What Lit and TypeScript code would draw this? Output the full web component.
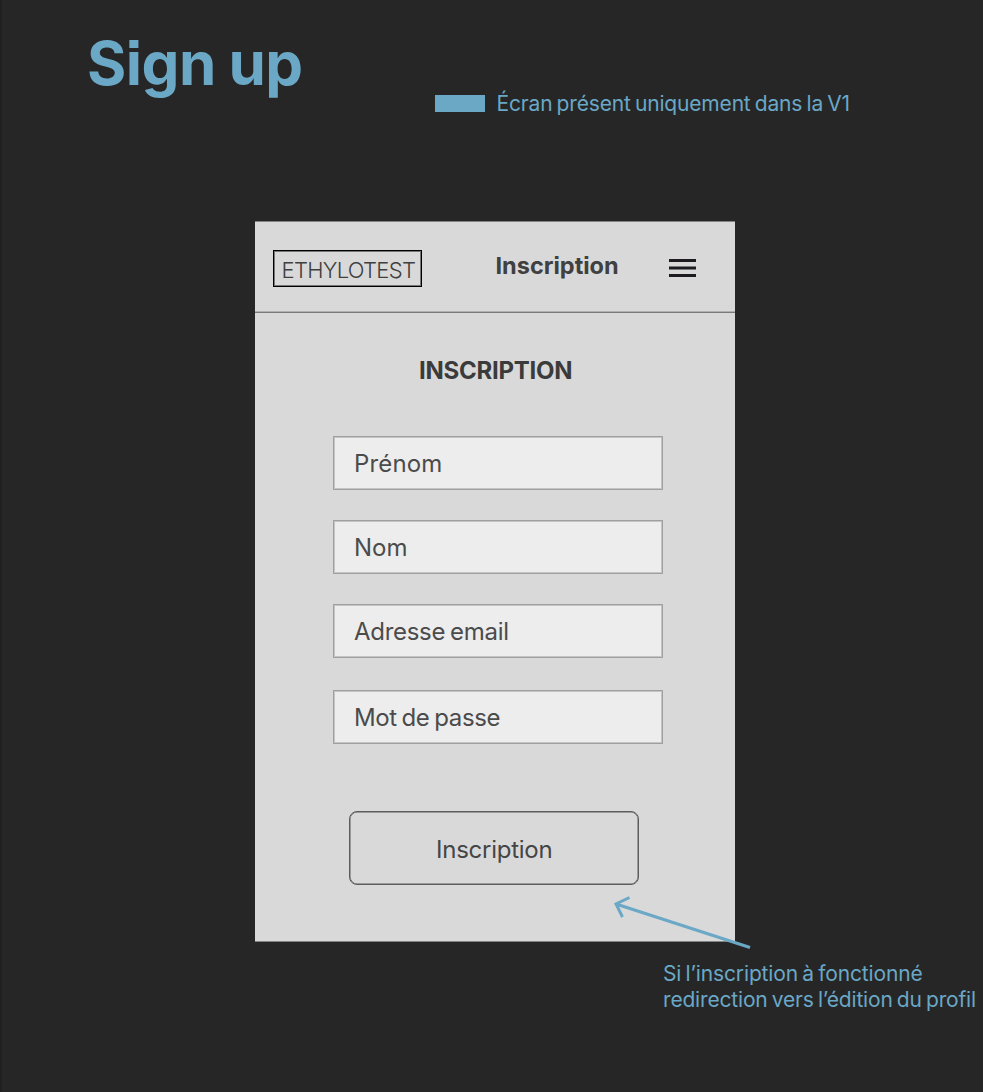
import { LitElement, html, css } from "lit";
import { customElement, property } from "lit/decorators.js";

@customElement("form-field")
class FormField extends LitElement {
  @property() label = "";
  static styles = css`
    :host {
      display: block;
      box-sizing: border-box;
      width: 330px;
      height: 54px;
      padding-left: 20px;
      border: 1px solid #a0a0a0;
      box-shadow: inset 0 0 0 1px #c4c4c4;
      background: #ededed;
      color: #4b4b4b;
      font-size: 24px;
      font-weight: 400;
      line-height: 54px;
      white-space: nowrap;
      word-spacing: -1.5px;
      letter-spacing: var(--track, 0);
    }
  `;
  render() {
    return html`${this.label}`;
  }
}

@customElement("app-root")
class AppRoot extends LitElement {
  static styles = css`
    :host {
      display: block;
      position: relative;
      box-sizing: border-box;
      width: 983px;
      height: 1092px;
      overflow: hidden;
      background: #262626;
      border-left: 2px solid #202020;
      font-family: Inter, "Liberation Sans", sans-serif;
      font-feature-settings: "ss07" 1;
      color: #6aa8c6;
    }
    .top {
      display: flex;
      height: 221px;
      box-sizing: border-box;
      padding: 33px 0 0 85px;
    }
    h1 {
      margin: 0;
      width: 348px;
      font-size: 60px;
      line-height: 60px;
      font-weight: 700;
      letter-spacing: -0.5px;
      word-spacing: -1px;
      white-space: nowrap;
    }
    .legend {
      display: flex;
      height: 26px;
      margin-top: 58px;
      gap: 12px;
      font-size: 21px;
      line-height: 26px;
      letter-spacing: -0.17px;
      word-spacing: -1.5px;
      font-weight: 400;
      white-space: nowrap;
    }
    .swatch {
      width: 49.5px;
      height: 17px;
      margin-top: 4px;
      background: #6aa8c6;
    }
    .phone {
      width: 480px;
      height: 721px;
      box-sizing: border-box;
      margin-left: 253px;
      background: #d9d9d9;
      border-top: 1px solid #838383;
      border-bottom: 1px solid #838383;
      color: #404040;
    }
    .bar {
      display: flex;
      box-sizing: border-box;
      height: 91px;
      padding-left: 18px;
      border-bottom: 1px solid #7a7a7a;
      box-shadow: inset 0 -1px #b0b0b0;
    }
    .logo {
      box-sizing: border-box;
      width: 149px;
      height: 37px;
      margin-top: 28px;
      padding-left: 7.5px;
      border: 1px solid #000;
      box-shadow: inset 0 0 0 1px #777;
      font-size: 22px;
      font-weight: 300;
      line-height: 38px;
      letter-spacing: -0.7px;
      white-space: nowrap;
    }
    .title {
      padding-left: 73.5px;
      margin-top: 29px;
      box-sizing: border-box;
      width: 247px;
      font-size: 23.5px;
      font-weight: 680;
      line-height: 30px;
      letter-spacing: 0;
      white-space: nowrap;
    }
    .menu {
      width: 27px;
      height: 18px;
      margin-top: 37px;
    }
    h2 {
      margin: 43px 0 0 164px;
      font-size: 24px;
      font-weight: 650;
      line-height: 30px;
      letter-spacing: -0.25px;
      white-space: nowrap;
      color: #3b3b3b;
    }
    .fields {
      display: flex;
      flex-direction: column;
      gap: 30px;
      padding: 50px 0 0 78px;
    }
    .last {
      margin-top: 1.5px;
    }
    .t1 { --track: 0.15px; }
    .t2 { --track: 0px; }
    .t3 { --track: -0.3px; }
    .t4 { --track: -0.4px; }
    .submit {
      display: block;
      box-sizing: border-box;
      width: 290px;
      height: 74px;
      margin: 67px 0 0 94px;
      padding: 4px 0 0 86px;
      border: 1px solid #5c5c5c;
      border-radius: 8px;
      box-shadow: inset 0 0 0 0.5px #5c5c5c;
      background: none;
      color: #454545;
      font: 400 24px/30px Inter, sans-serif;
      font-feature-settings: "ss07" 1;
      letter-spacing: -0.25px;
      text-align: left;
    }
    .note {
      margin: 19px 0 0 661px;
      font-size: 21px;
      line-height: 26px;
      font-weight: 400;
      word-spacing: -1.5px;
      white-space: nowrap;
    }
    .n1 { letter-spacing: -0.14px; }
    .n2 { letter-spacing: -0.18px; }
    .arrow {
      position: absolute;
      left: 608px;
      top: 890px;
      width: 150px;
      height: 64px;
    }
  `;
  render() {
    return html`
      <div class="top">
        <h1>Sign up</h1>
        <div class="legend">
          <span class="swatch"></span>
          <span>Écran présent uniquement dans la V1</span>
        </div>
      </div>
      <div class="phone">
        <div class="bar">
          <div class="logo">ETHYLOTEST</div>
          <div class="title">Inscription</div>
          <svg class="menu" viewBox="0 0 27 18">
            <path d="M0 1.5H27M0 9H27M0 16.5H27" stroke="#1d1b20" stroke-width="3" />
          </svg>
        </div>
        <h2>INSCRIPTION</h2>
        <div class="fields">
          <form-field class="t1" label="Prénom"></form-field>
          <form-field class="t2" label="Nom"></form-field>
          <form-field class="t3" label="Adresse email"></form-field>
          <form-field class="t4 last" label="Mot de passe"></form-field>
        </div>
        <button class="submit">Inscription</button>
      </div>
      <div class="note">
        <div class="n1">Si l’inscription à fonctionné</div>
        <div class="n2">redirection vers l’édition du profil</div>
      </div>
      <svg class="arrow" viewBox="610 890 150 64">
        <path d="M750 947.5L616 904M629.5 897.5L616 904L622.5 917" fill="none" stroke="#6aa8c6" stroke-width="3" />
      </svg>
    `;
  }
}
